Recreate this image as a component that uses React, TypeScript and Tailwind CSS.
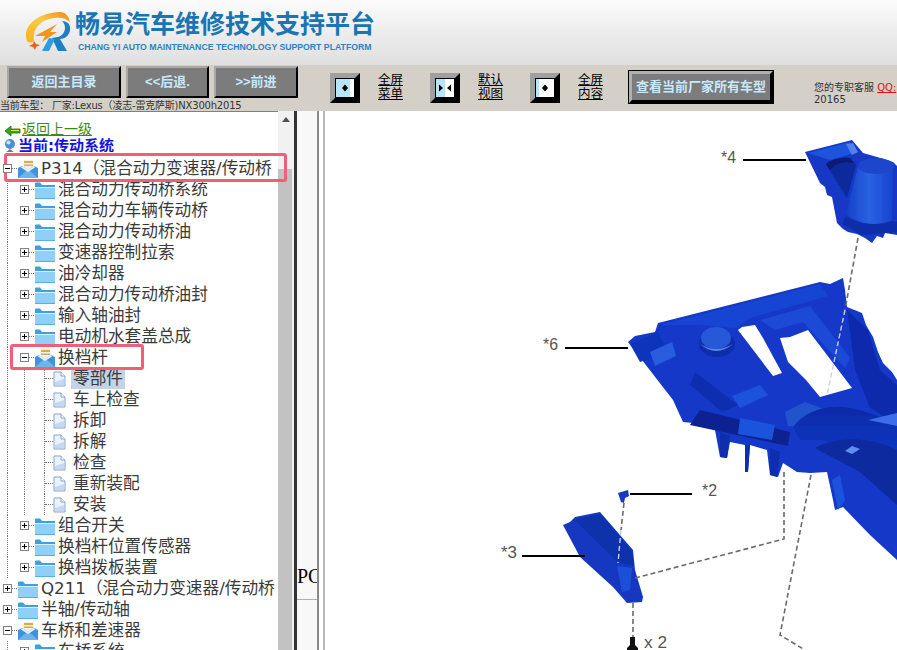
import React from "react";

const cjk = "font-['DejaVu_Sans','Noto_Sans_CJK_SC',sans-serif]";

type Kind = "closed" | "open" | "doc";
interface Row {
  level: number;
  label: string;
  kind: Kind;
  selected?: boolean;
}

const rows: Row[] = [
  { level: 0, label: "P314（混合动力变速器/传动桥", kind: "open" },
  { level: 1, label: "混合动力传动桥系统", kind: "closed" },
  { level: 1, label: "混合动力车辆传动桥", kind: "closed" },
  { level: 1, label: "混合动力传动桥油", kind: "closed" },
  { level: 1, label: "变速器控制拉索", kind: "closed" },
  { level: 1, label: "油冷却器", kind: "closed" },
  { level: 1, label: "混合动力传动桥油封", kind: "closed" },
  { level: 1, label: "输入轴油封", kind: "closed" },
  { level: 1, label: "电动机水套盖总成", kind: "closed" },
  { level: 1, label: "换档杆", kind: "open" },
  { level: 2, label: "零部件", kind: "doc", selected: true },
  { level: 2, label: "车上检查", kind: "doc" },
  { level: 2, label: "拆卸", kind: "doc" },
  { level: 2, label: "拆解", kind: "doc" },
  { level: 2, label: "检查", kind: "doc" },
  { level: 2, label: "重新装配", kind: "doc" },
  { level: 2, label: "安装", kind: "doc" },
  { level: 1, label: "组合开关", kind: "closed" },
  { level: 1, label: "换档杆位置传感器", kind: "closed" },
  { level: 1, label: "换档拨板装置", kind: "closed" },
  { level: 0, label: "Q211（混合动力变速器/传动桥", kind: "closed" },
  { level: 0, label: "半轴/传动轴", kind: "closed" },
  { level: 0, label: "车桥和差速器", kind: "open" },
  { level: 1, label: "车桥系统", kind: "closed" },
];

const FolderIcon = () => (
  <svg width="22" height="20" viewBox="0 0 22 20" className="shrink-0">
    <path d="M1 3 L1 19 L21 19 L21 5 L8 5 L6 2 L2 2 Z" fill="#8fd0f8" />
    <path d="M1 3 L6 3 L8 5 L21 5 L21 7 L1 7 Z" fill="#3f9fe0" />
    <path d="M1 7 L21 7 L21 8 L1 8 Z" fill="#d8f0ff" />
    <path d="M1 18 L21 18 L21 19 L1 19 Z" fill="#58aee8" />
  </svg>
);

const OpenIcon = () => (
  <svg width="22" height="20" viewBox="0 0 22 20" className="shrink-0">
    <path d="M5 10 L7 1 L16 1 L18 10 Z" fill="#f4efe0" />
    <path d="M7 2 L16 2 L16 4 L7 4 Z" fill="#e6a836" />
    <path d="M7 5.5 L16 5.5 L16 7 L7 7 Z" fill="#c4ad7c" />
    <path d="M1 9 L5 7 L11 11 L17 7 L21 9 L21 19 L1 19 Z" fill="#3f93dc" />
    <path d="M1 19 L9 12 L13 12 L21 19 Z" fill="#6db4ec" />
    <path d="M5 7 L11 11 L17 7 L18 8.5 L11 13 L4 8.5 Z" fill="#e8f4fc" />
  </svg>
);

const DocIcon = () => (
  <svg width="13" height="16" viewBox="0 0 13 16" className="shrink-0">
    <path d="M1 1 L8 1 L12 5 L12 15 L1 15 Z" fill="#eaf2fc" stroke="#8aa4cc" />
    <path d="M8 1 L8 5 L12 5" fill="#fff" stroke="#8aa4cc" />
    <path d="M2 11 L11 8 L11 14 L2 14 Z" fill="#c4d8f2" />
  </svg>
);

const Expander = ({ open }: { open: boolean }) => (
  <span className="relative z-10 flex h-[9px] w-[9px] shrink-0 items-center justify-center border border-[#808080] bg-white">
    <span className="absolute h-px w-[5px] bg-black" />
    {!open && <span className="absolute h-[5px] w-px bg-black" />}
  </span>
);

const Guide = () => (
  <span className="h-full w-[17px] shrink-0 pl-[7px]">
    <span className="block h-full border-l border-dotted border-[#777]" />
  </span>
);

const TreeRow = ({ row }: { row: Row }) => {
  const icon =
    row.kind === "closed" ? <FolderIcon /> : row.kind === "open" ? <OpenIcon /> : <DocIcon />;
  return (
    <div className="flex h-[21px] w-[278px] items-center overflow-hidden whitespace-nowrap">
      {row.level >= 1 && <Guide />}
      {row.level === 2 && <Guide />}
      {row.kind === "doc" ? (
        <span className="flex h-full w-[19px] shrink-0 items-center pl-[10px]">
          <span className="flex h-full w-full items-center border-l border-dotted border-[#777]">
            <span className="w-full border-t border-dotted border-[#777]" />
          </span>
        </span>
      ) : (
        <span className="flex w-[17px] shrink-0 items-center pl-[3px]">
          <Expander open={row.kind === "open"} />
          <span className="w-[5px] border-t border-dotted border-[#777]" />
        </span>
      )}
      {icon}
      <span
        className={`text-[16.67px] leading-[21px] text-[#3a3a3a] ${
          row.kind === "doc" ? "ml-[5px] px-[2px]" : "ml-[2px]"
        } ${row.selected ? "bg-[#c3d3ea]" : ""}`}
      >
        {row.label}
      </span>
    </div>
  );
};

const NavButton = ({ label, className }: { label: string; className: string }) => (
  <button
    className={`flex h-[32px] items-center justify-center border-2 border-t-[#a8a8a8] border-l-[#a8a8a8] border-r-black border-b-black bg-[#7c7c7c] font-['Liberation_Sans','Noto_Sans_CJK_SC',sans-serif] text-[13px] font-bold text-[#c6e8fc] ${className}`}
  >
    {label}
  </button>
);

const PaneToggle = ({ mode }: { mode: "menu" | "both" | "content" }) => (
  <span className="flex h-[30px] w-[30px] shrink-0 items-center justify-center border-[5px] border-t-[#a0a0a0] border-l-[#a0a0a0] border-r-black border-b-black bg-[#888]">
    <svg width="20" height="20" viewBox="0 0 20 20">
      <rect width="20" height="20" fill="#000" />
      <rect x="1" y="1" width="18" height="18" fill={mode === "content" ? "#fff" : "#b8e4fa"} />
      {mode === "menu" && <rect x="15" y="1" width="4" height="18" fill="#fff" />}
      {mode === "both" && <rect x="10" y="1" width="9" height="18" fill="#fff" />}
      {mode === "content" && <rect x="1" y="1" width="3" height="18" fill="#b8e4fa" />}
      {mode === "menu" && <path d="M7 10 L10 6.5 L13 10 L10 13.5 Z" fill="#000" />}
      {mode === "content" && <path d="M7 10 L10 6.5 L13 10 L10 13.5 Z" fill="#000" />}
      {mode === "both" && <path d="M4 6.5 L8 10 L4 13.5 Z M16 6.5 L12 10 L16 13.5 Z" fill="#000" />}
    </svg>
  </span>
);

const PaneLabel = ({ top, bottom }: { top: string; bottom: string }) => (
  <span className="ml-[18px] block w-[26px] shrink-0 text-[12.5px] leading-[14px] text-black underline">
    {top}
    <br />
    {bottom}
  </span>
);

const Logo = () => (
  <svg width="50" height="44" viewBox="0 0 50 44" className="shrink-0">
    <defs>
      <linearGradient id="ring" x1="0" y1="1" x2="1" y2="0">
        <stop offset="0" stopColor="#f7b21e" />
        <stop offset="0.55" stopColor="#f8c94a" />
        <stop offset="1" stopColor="#ee8a14" />
      </linearGradient>
    </defs>
    <path
      d="M3 31 C-2 17 12 3 36 2 C41 2 45 6 46 12 C42 8 36 7 30 8 C16 10 8 19 10 31 C8 33 5 33 3 31 Z"
      fill="url(#ring)"
    />
    <path d="M11 26 L33 14 L26 22 L33 22 L18 32 L21 26 Z" fill="#f2951a" />
    <path d="M10 31 L12 34 L16 35 L12 37 L11 40 L9 37 L5 36 L9 34 Z" fill="#e8601a" />
    <path d="M38 11 C47 11 48 20 44 25 C42 28 38 29 36 29 L43 41 L34 41 L28 28 L34 27 C38 26 41 22 41 18 C41 15 40 13 38 11 Z" fill="#1f7fc4" />
    <path d="M18 41 L25 28 L31 29 L25 41 Z" fill="#2f9ce0" />
  </svg>
);

const PartsDrawing = () => (
  <svg viewBox="325 111 572 539" className="h-full w-full">
    <defs>
      <linearGradient id="cone" x1="0" y1="0" x2="1" y2="0">
        <stop offset="0" stopColor="#1740c8" />
        <stop offset="0.5" stopColor="#2a62e4" />
        <stop offset="1" stopColor="#1644cc" />
      </linearGradient>
      <linearGradient id="dome" x1="0" y1="0" x2="0" y2="1">
        <stop offset="0" stopColor="#0b2aa8" />
        <stop offset="1" stopColor="#163fd0" />
      </linearGradient>
      <filter id="soft">
        <feGaussianBlur stdDeviation="0.5" />
      </filter>
    </defs>
    <g filter="url(#soft)">
      {/* part 4 */}
      <path
        d="M805 152 L852 140 L863 153 L877 157 L893 162 L897 166 L897 235 L885 233 L883 238 L877 236 L872 243 L865 238 L857 234 L848 232 L843 229 L837 223 L832 197 L827 195 L825 187 L820 183 Z"
        fill="#1238c4"
      />
      <path d="M808 153 L850 142 L858 152 L830 160 Z" fill="#1f54dc" />
      <path d="M846 144 L853 143 L858 152 L852 155 Z" fill="#4f82ec" />
      <path d="M826 164 C832 159 842 157 850 158 L856 165 L847 198 Z" fill="#0c2a9c" />
      <path d="M826 164 C832 159 842 157 850 158 L854 163 C845 161 835 163 830 170 Z" fill="#081a70" />
      <path d="M858 167 L893 167 L892 220 C880 226 860 226 846 214 Z" fill="url(#cone)" />
      <ellipse cx="876" cy="166" rx="18" ry="8" fill="#1a46cc" />
      <path d="M846 216 C860 226 880 226 892 221 L897 222 L897 232 L862 235 L842 224 Z" fill="#0f2ea8" />

      {/* part 6 body */}
      <path
        d="M628 342 L635 336 L655 332 L658 323 L820 282 L830 284 L843 278 L845 290 L847 307 L862 313 L866 325 L873 337 L878 352 L883 363 L892 372 L897 380 L897 560 L870 535 L843 507 L835 510 L833 500 L827 472 L810 473 L797 472 L783 463 L778 477 L770 475 L767 450 L750 445 L748 472 L745 472 L745 445 L730 442 L727 458 L720 457 L715 430 L693 423 L683 422 L673 400 Z"
        fill="#1339c8"
      />
      {/* plate and ribs */}
      <path d="M660 325 L820 284 L828 296 L750 318 L736 328 L700 325 Z" fill="#1844d4" />
      <path d="M630 344 L658 332 L668 352 L640 362 Z" fill="#1034bc" />
      <path d="M650 352 L672 342 L676 356 L655 366 Z" fill="#2a5ce0" />
      <path d="M695 372 L738 405 L722 412 L690 385 Z" fill="#0f2fae" />
      <path d="M732 396 L760 385 L768 395 L740 408 Z" fill="#1f52dc" />
      <path d="M760 320 L810 306 L850 358 L845 368 L803 322 L775 330 Z" fill="#1a4ad6" />
      <path d="M847 310 L868 330 L880 370 L897 385 L897 425 L870 408 L855 370 Z" fill="#0f2cac" />
      <path d="M700 410 L790 432 L788 446 L690 425 Z" fill="#0a2390" />
      <path d="M720 432 L730 436 L727 458 L720 457 Z M745 445 L750 445 L748 472 L745 472 Z M770 448 L780 452 L777 477 L770 475 Z" fill="#0f2fae" />
      <path d="M740 418 L775 425 L772 440 L738 434 Z" fill="#1f52dc" />
      {/* windows */}
      <path d="M738 330 L742 327 L755 325 L763 338 L782 373 L773 376 Z" fill="#fff" />
      <path d="M780 338 L790 337 L808 330 L852 388 L820 397 L806 380 L788 362 Z" fill="#fff" />
      {/* knob */}
      <ellipse cx="717" cy="344" rx="18" ry="13" fill="#0f2eaa" />
      <ellipse cx="716" cy="338" rx="15" ry="11" fill="#2558d8" />
      <path d="M700 344 Q716 354 733 344 Q716 358 700 344 Z" fill="#5a88e8" />
      {/* dome */}
      <path d="M785 412 L805 402 L822 408 L796 427 L788 426 Z" fill="#2452cc" />
      <path d="M793 427 C805 410 830 404 850 408 C870 412 885 418 897 424 L897 480 L860 450 L820 440 L800 440 Z" fill="url(#dome)" />
      <path d="M815 448 C835 436 870 436 897 450 L897 505 L860 472 Z" fill="#0c2a9e" />
      <path d="M845 451 L852 446 L860 449 L852 454 Z" fill="#5f8ef0" />
      <path d="M868 420 L897 413 L897 426 L878 422 Z" fill="#3a6ee8" />
      <path d="M832 480 L840 475 L845 500 L838 510 Z" fill="#1f52dc" />

      {/* part 2 */}
      <path d="M618 493 L628 490 L629 496 L625 498 L624 503 L621 502 Z" fill="#1238c4" />
      {/* part 3 */}
      <path
        d="M563 525 L570 522 L575 517 L600 512 L633 550 L635 570 L643 597 L642 602 L627 603 L613 587 L580 557 Z"
        fill="#1238c0"
      />
      <path d="M575 520 L600 514 L632 552 L634 566 L618 562 Z" fill="#0f30ac" />
      <path d="M617 566 L632 568 L630 590 L622 592 Z" fill="#1f50d8" />
    </g>
    {/* dashed leaders */}
    <g fill="none" stroke="#6a6a6a" strokeWidth="1.6" strokeDasharray="5 3">
      <path d="M858 238 L845 310" />
      <path d="M784 472 L784 539 L635 578" />
      <path d="M811 475 L780 635 L805 650" />
      <path d="M624 503 L621 530" />
      <path d="M633 603 L633 638" />
    </g>
    <g fill="none" stroke="#c8d0e8" strokeWidth="1.4" strokeDasharray="5 3">
      <path d="M845 310 L827 395" />
      <path d="M621 530 L618 563" />
    </g>
    {/* call-out lines */}
    <g stroke="#000" strokeWidth="2">
      <path d="M743 160 L806 160" />
      <path d="M565 348 L628 348" />
      <path d="M630 494 L692 494" />
      <path d="M522 556 L585 556" />
    </g>
    {/* screw */}
    <path d="M630 637 L635 637 L635 645 L638 648 L638 650 L627 650 L627 648 L630 645 Z" fill="#111" />
    <g fontFamily="'Liberation Sans', sans-serif" fill="#555" fontSize="17">
      <text x="721" y="163" textLength="15" lengthAdjust="spacingAndGlyphs">*4</text>
      <text x="543" y="350" textLength="15" lengthAdjust="spacingAndGlyphs">*6</text>
      <text x="702" y="496" textLength="15" lengthAdjust="spacingAndGlyphs">*2</text>
      <text x="501" y="558" textLength="16" lengthAdjust="spacingAndGlyphs">*3</text>
      <text x="644" y="648" textLength="23" lengthAdjust="spacingAndGlyphs">x 2</text>
    </g>
  </svg>
);

export default function App() {
  return (
    <div className={`flex h-[650px] w-[897px] flex-col overflow-hidden bg-white ${cjk}`}>
      {/* logo strip */}
      <header className="flex h-[65px] shrink-0 items-start bg-gradient-to-b from-[#fbfbfb] to-[#dfdfdf] pl-[24px] pt-[10px]">
        <Logo />
        <div className="ml-[1px] flex flex-col">
          <div className="h-[29px] text-[25px] font-bold leading-[29px] text-[#1a76b2]">
            畅易汽车维修技术支持平台
          </div>
          <div className="ml-[3px] mt-[3px] whitespace-nowrap font-['Liberation_Sans',sans-serif] text-[8.7px] font-bold leading-[11px] text-[#2a84c0]">
            CHANG YI AUTO MAINTENANCE TECHNOLOGY SUPPORT PLATFORM
          </div>
        </div>
      </header>

      {/* toolbar */}
      <div className="flex h-[46px] shrink-0 overflow-hidden bg-[#d4d0c8]">
        <div className="flex w-[330px] shrink-0 flex-col">
          <div className="flex pl-[7px] pt-px">
            <NavButton label="返回主目录" className="w-[114px]" />
            <NavButton label="<<后退." className="ml-[5px] w-[83px]" />
            <NavButton label=">>前进" className="ml-[5px] w-[84px]" />
          </div>
          <div className="mt-px whitespace-nowrap text-[10px] leading-[13px] tracking-[-0.2px] text-[#333]">
            当前车型： 厂家:Lexus（凌志-雷克萨斯)NX300h2015
          </div>
        </div>
        <div className="flex min-w-0 flex-1 items-start pt-[8px]">
          <PaneToggle mode="menu" />
          <PaneLabel top="全屏" bottom="菜单" />
          <span className="w-[26px] shrink-0" />
          <PaneToggle mode="both" />
          <PaneLabel top="默认" bottom="视图" />
          <span className="w-[26px] shrink-0" />
          <PaneToggle mode="content" />
          <PaneLabel top="全屏" bottom="内容" />
          <span className="w-[25px] shrink-0" />
          <button className="-mt-[2px] flex h-[32px] w-[144px] shrink-0 items-center justify-center border-[3px] border-t-[#b0b0b0] border-l-[#b0b0b0] border-r-black border-b-black bg-[#7c7c7c] text-[13px] font-bold text-[#c6e8fc] outline outline-1 outline-black">
            查看当前厂家所有车型
          </button>
          <div className="ml-[41px] mt-[9px] shrink-0 whitespace-nowrap text-[10px] leading-[12px] text-[#333]">
            您的专职客服 <span className="text-[#e01010] underline">QQ:</span>
            <br />
            20165
          </div>
        </div>
      </div>

      {/* body */}
      <div className="flex min-h-0 flex-1">
        <aside className="flex w-[294px] shrink-0">
          <div className="relative w-[278px] shrink-0 border-t border-[#808080] pt-[9px]">
            <div className="flex h-[17px] items-end pl-[4px]">
              <svg width="17" height="12" viewBox="0 0 17 12" className="mb-[1px] shrink-0">
                <path d="M1 6 L7 1 L7 4 L16 4 L16 8 L7 8 L7 11 Z" fill="#34a51c" stroke="#1b6e0e" strokeWidth="0.8" />
                <path d="M7 5 L15 5 L15 6 L7 6 Z" fill="#f4e23c" />
              </svg>
              <span className="ml-px text-[14px] leading-[17px] text-[#3c8a14] underline">返回上一级</span>
            </div>
            <div className="flex h-[14px] items-start overflow-hidden pl-[2px]">
              <svg width="16" height="16" viewBox="0 0 16 16" className="shrink-0">
                <circle cx="8" cy="6" r="5" fill="#4a90d8" />
                <circle cx="6.5" cy="4.5" r="2" fill="#c8e4fa" />
                <path d="M3 15 L8 11 L13 15 Z" fill="#6a7a8c" />
              </svg>
              <span className="text-[15px] font-bold leading-[17px] text-[#1414e0] underline">当前:传动系统</span>
            </div>
            <div className="mt-[6px] overflow-hidden">
              {rows.map((row, i) => (
                <TreeRow key={i} row={row} />
              ))}
            </div>
            {/* red call-out frames drawn over the tree */}
            <div className="absolute left-[4px] top-[41px] h-[29px] w-[283px] rounded-[3px] border-[3px] border-[#ee5f78]" />
            <div className="absolute left-[10px] top-[232px] h-[26px] w-[134px] rounded-[3px] border-[3px] border-[#ee5f78]" />
          </div>
          {/* tree scrollbar */}
          <div className="flex w-[16px] shrink-0 flex-col bg-[#f1f1f1] pr-[2px]">
            <div className="flex h-[58px] items-start justify-center pt-[6px]">
              <span className="mr-[-2px] h-0 w-0 border-x-[4px] border-b-[5px] border-x-transparent border-b-[#505050]" />
            </div>
            <div className="flex-1 bg-[#c2c2c2]" />
          </div>
        </aside>

        {/* splitter with clipped frame */}
        <div className="w-[3px] shrink-0 bg-[#333]" />
        <div className="flex w-[22px] shrink-0 flex-col overflow-hidden border-r-2 border-[#8a8a8a] bg-[#f8f8f8]">
          <div className="flex h-[489px] shrink-0 items-end overflow-hidden whitespace-nowrap border-b border-[#b0b0b0] pb-[12px] font-['Liberation_Serif',serif] text-[20px] leading-[22px] text-black">
            PC
          </div>
        </div>
        <div className="w-[4px] shrink-0 bg-white" />
        <div className="w-[2px] shrink-0 bg-[#b8b8b8]" />
        <main className="min-w-0 flex-1 bg-white">
          <PartsDrawing />
        </main>
      </div>
    </div>
  );
}
